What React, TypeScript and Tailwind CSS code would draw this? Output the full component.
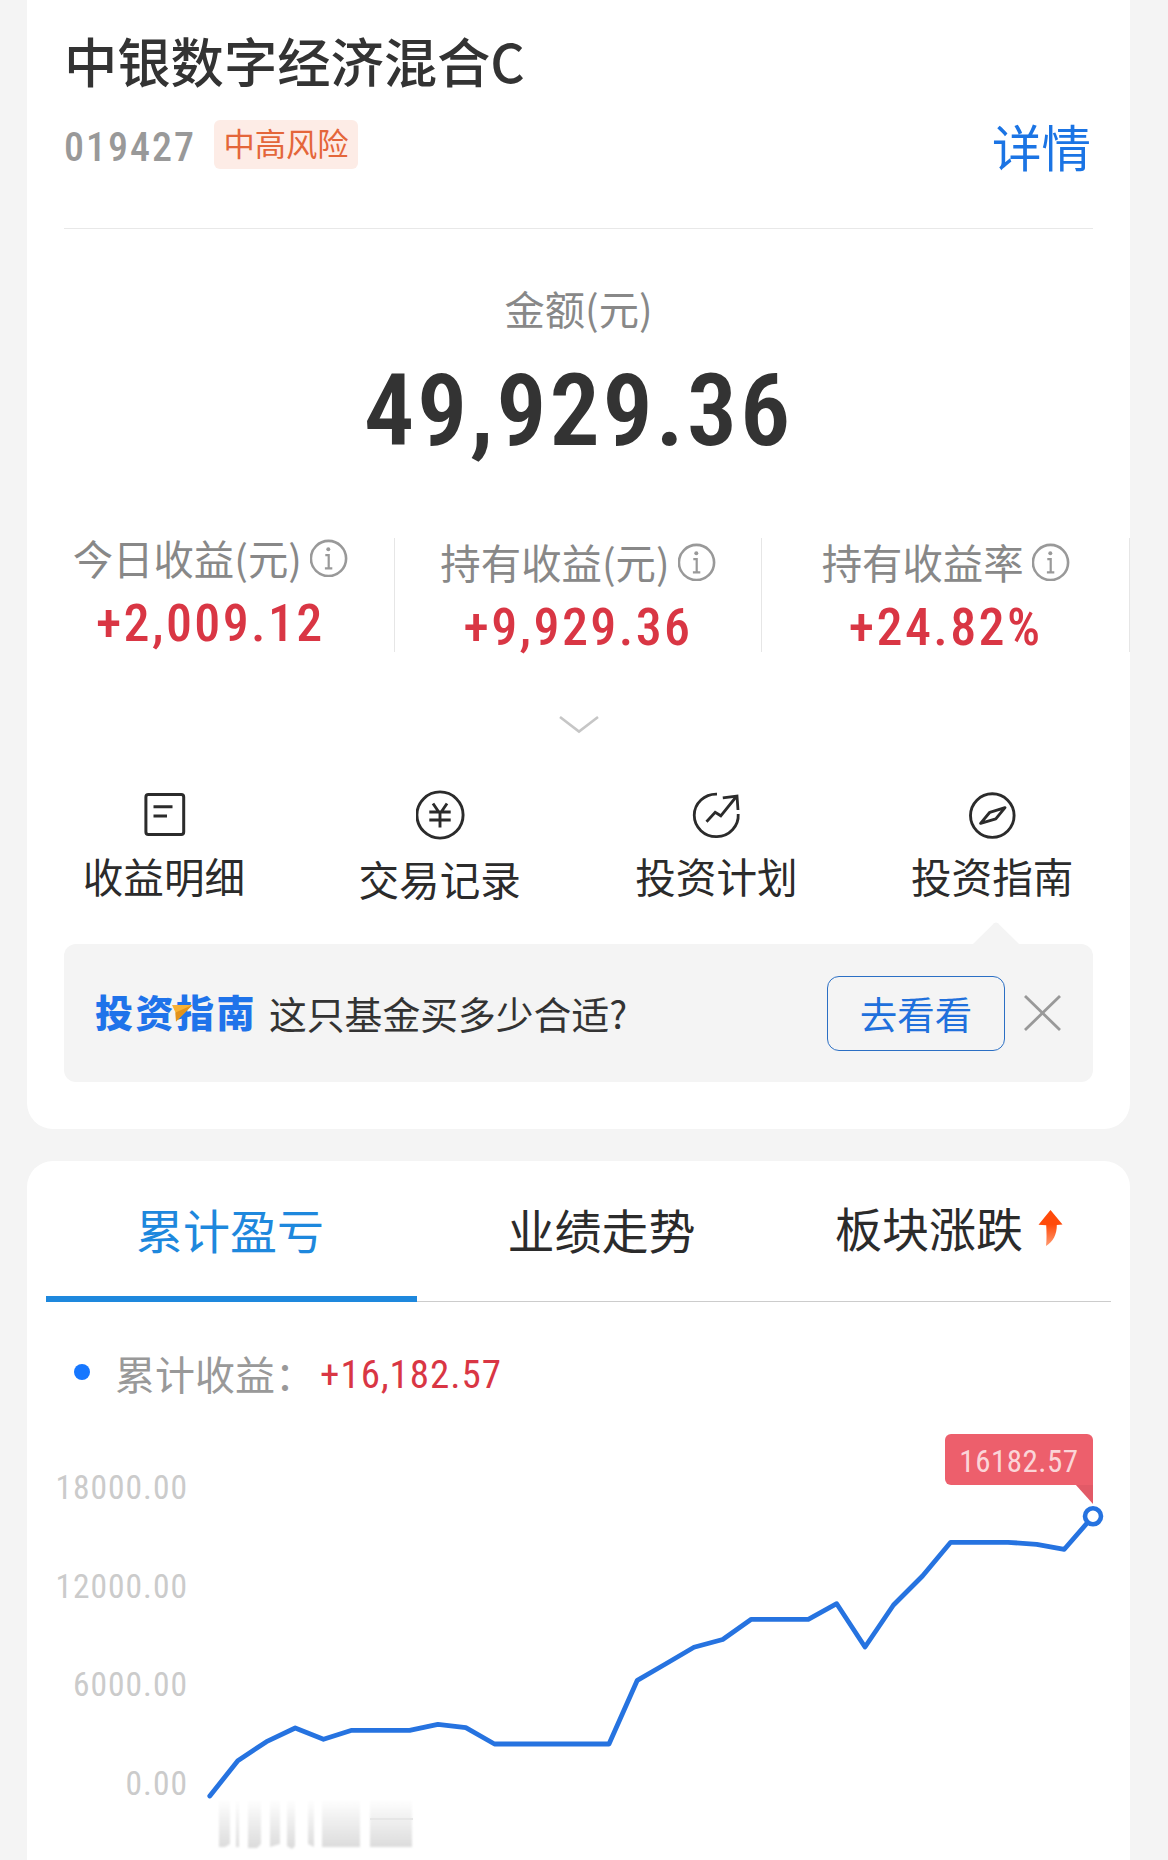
import React from 'react'

const cjk = "font-['Noto_Sans_CJK_SC',sans-serif]"
const din = "font-['Roboto','Noto_Sans_CJK_SC',sans-serif] [font-stretch:75%]"

const stats = [
  { label: '今日收益(元)', value: '+2,009.12', className: "-top-[5px]" },
  { label: '持有收益(元)', value: '+9,929.36', className: "-top-px" },
  { label: '持有收益率', value: '+24.82%', className: "-top-px" },
]

const yLabels = ['18000.00', '12000.00', '6000.00', '0.00']

// chart space: starts at the top of the plot, one unit per pixel
const linePoints = [
  [182.8, 376], [210.8, 340.7], [239.5, 321.7], [268.2, 308], [296.5, 319.3],
  [324.8, 310.3], [382.6, 310.3], [410.9, 304.3], [438.8, 307.7], [467.5, 324],
  [582, 324], [610.3, 260.3], [638.5, 244], [667, 227.3], [695.7, 219.5],
  [724.3, 199.3], [781.3, 199.3], [809.7, 183.7], [838, 227], [866.5, 185],
  [895.5, 156], [923.7, 122.3], [981, 122.3], [1009.7, 124.3], [1037.3, 129.3],
  [1066, 96.3],
]

const InfoIcon = () => (
  <svg width="38" height="38" viewBox="0 0 38 38" fill="none" stroke="#999" strokeWidth="2.6">
    <circle cx="18.5" cy="19.5" r="17.6" />
    <path d="M15.3 16.1h3.4v13M14.9 29.3h7.4" strokeWidth="2.2" />
    <circle cx="18.3" cy="10.3" r="2" fill="#999" stroke="none" />
  </svg>
)

const DetailIcon = () => (
  <svg width="50" height="50" viewBox="0 0 50 50" fill="none" stroke="#2b2b2b" strokeWidth="3">
    <rect x="5.9" y="4.4" width="37.8" height="40.2" rx="2.5" />
    <path d="M13.5 16.7h19M13.5 26H27" />
  </svg>
)

const YenIcon = () => (
  <svg width="50" height="50" viewBox="0 0 50 50" fill="none" stroke="#2b2b2b" strokeWidth="2.9">
    <circle cx="24" cy="25" r="23.1" />
    <path d="M17 13.5l5.6 8.3M31 13.5l-5.6 8.3M13.3 22h21.4M13.3 30h21.4M24 22v15.6" />
  </svg>
)

const PlanIcon = () => (
  <svg width="50" height="50" viewBox="0 0 50 50" fill="none" stroke="#2b2b2b" strokeWidth="2.8">
    <path d="M26 4.1A22 21.3 0 1 0 47.2 24" />
    <path d="M15.5 31.8l8.7-9.4 5.6 3.4L45.8 6" />
    <path d="M31.8 7.8L46 6l1 14" />
  </svg>
)

const GuideIcon = () => (
  <svg width="50" height="50" viewBox="0 0 50 50" fill="none" stroke="#2b2b2b" strokeWidth="2.9">
    <circle cx="25.3" cy="25.6" r="21.8" />
    <path d="M38 17.6L22.8 22.3 13.6 33.4l15.2-4.6z" strokeLinejoin="round" />
  </svg>
)

const actions = [
  { label: '收益明细', icon: <DetailIcon />, className: "-ml-0.5" },
  { label: '交易记录', icon: <YenIcon />, className: "-ml-0.5 pt-[3px]" },
  { label: '投资计划', icon: <PlanIcon />, className: "" },
  { label: '投资指南', icon: <GuideIcon />, className: "" },
]

const FundCard = () => {
  return (
    <div className="h-[1129px] bg-white rounded-b-[26px] flex flex-col">
      <div className="h-[229px] mx-[37px] border-b border-[#e8e8e8] flex flex-col">
        <h1 className="mt-7 h-16 leading-[64px] text-[53.3px] font-medium text-[#333]">中银数字经济混合C</h1>
        <div className="mt-[27px] h-[50px] flex flex-row items-center">
          <span className={`${din} text-[40px] font-medium tracking-[2px] text-[#999] pt-[7px] w-[130px]`}>019427</span>
          <span className="ml-5 w-[144px] h-[49px] rounded-md bg-[#fdece6] text-[#e4663a] text-[31.3px] leading-[46px] text-center">中高风险</span>
          <a className="ml-auto mr-0.5 text-[49.5px] leading-[50px] text-[#1b74e4] pt-1">详情</a>
        </div>
      </div>

      <div className="flex flex-col items-center">
        <span className="mt-[54px] h-[50px] leading-[50px] text-[40.3px] text-[#888]">金额(元)</span>
        <span className={`${din} mt-[22px] h-[112px] leading-[112px] text-[100px] font-semibold tracking-[2.8px] text-[#333]`}>49,929.36</span>
      </div>

      <div className="mt-[71px] h-[114px] grid grid-cols-3 grid-rows-[114px]">
        {stats.map((stat) => (
          <div key={stat.label} className="border-r border-[#e6e6e6]">
            <div className={`relative flex flex-col items-center ${stat.className}`}>
              <div className="h-[50px] flex flex-row items-center gap-2">
                <span className="text-[40.4px] leading-[50px] text-[#888]">{stat.label}</span>
                <InfoIcon />
              </div>
              <span className={`${din} mt-[9px] h-[64px] leading-[64px] text-[52px] font-medium tracking-[2.4px] text-[#d93644]`}>{stat.value}</span>
            </div>
          </div>
        ))}
      </div>

      <svg className="mt-[63px] mx-auto" width="42" height="20" viewBox="0 0 42 20" fill="none" stroke="#c6c6c6" strokeWidth="2.6">
        <path d="M2 2l19 14.5L40 2" />
      </svg>

      <div className="mt-[55px] h-[154px] grid grid-cols-4">
        {actions.map((action) => (
          <div key={action.label} className="flex flex-col items-center">
            {action.icon}
            <span className={`mt-[11px] leading-[50px] text-[40.6px] text-[#2b2b2b] ${action.className}`}>{action.label}</span>
          </div>
        ))}
      </div>

      <div className="relative mx-[37px] h-[138px] rounded-xl bg-[#f4f4f4] flex flex-row items-center">
        <svg className="absolute left-[908px] -top-[22px]" width="48" height="23" viewBox="0 0 48 23" fill="#f4f4f4">
          <path d="M0 23L22 1.2q2-1.6 4 0L48 23z" />
        </svg>
        <div className="relative -top-0.5 ml-[31px] text-[38px] tracking-[2.5px] font-black text-[#1f73ea] leading-[50px] whitespace-nowrap">
          投资指南
          <svg className="absolute left-[77px] top-[19px]" width="21" height="17" viewBox="0 0 21 17">
            <path d="M0 0h20.5L4 16.5l-.5-9z" fill="#f9b233" />
            <path d="M20.5 0L4 16.5l-.5-9z" fill="#e2931c" />
          </svg>
        </div>
        <span className="ml-3 text-[37.8px] leading-[50px] text-[#333]">这只基金买多少合适?</span>
        <button className="ml-auto w-[178px] h-[75px] rounded-xl border border-[#2b6fc4] text-[37.5px] text-[#2070dc]">去看看</button>
        <svg className="ml-[18px] mr-[31px]" width="39" height="36" viewBox="0 0 39 36" fill="none" stroke="#999" strokeWidth="2.8">
          <path d="M2 1l35 34M37 1L2 35" />
        </svg>
      </div>
    </div>
  )
}

const ProfitChart = () => {
  const end = linePoints[linePoints.length - 1]

  return (
    <div className="relative h-[440px]">
      <div className="absolute left-0 top-[19px] w-[161px] flex flex-col">
        {yLabels.map((label) => (
          <span key={label} className={`${din} h-[98.7px] leading-[98.7px] text-right text-[33.5px] tracking-[1px] text-[#cbcbcb]`}>{label}</span>
        ))}
      </div>

      <svg className="absolute left-0 top-0" width="1103" height="440" viewBox="0 0 1103 440" fill="none">
        <defs>
          <linearGradient id="fade" x1="0" y1="379" x2="0" y2="427" gradientUnits="userSpaceOnUse">
            <stop offset="0" stopColor="#fff" />
            <stop offset="1" stopColor="#dcdcdc" />
          </linearGradient>
          <filter id="soft"><feGaussianBlur stdDeviation="0.8" /></filter>
        </defs>
        <g fill="url(#fade)" filter="url(#soft)">
          <path d="M192 380h11v44l-5 3h-6z" />
          <rect x="209" y="380" width="3" height="47" />
          <path d="M221 380h13v44l-4 4h-9z" />
          <path d="M243 380h10v44l-10 3z" />
          <path d="M260 380h8v46l-3 3-5-3z" />
          <path d="M281 380h6v47l-6-3z" />
          <rect x="295" y="380" width="38" height="47" />
          <rect x="343" y="380" width="42" height="47" />
        </g>
        <path d="M343 399h43" stroke="#e6e6e6" strokeWidth="2" />
        <polyline points={linePoints.map((p) => p.join(',')).join(' ')} stroke="#2673e0" strokeWidth="4.8" strokeLinejoin="round" strokeLinecap="round" />
        <circle cx={end[0]} cy={end[1]} r="8" fill="#fff" stroke="#2673e0" strokeWidth="4.6" />
        <path d="M1048 64h18v20z" fill="#e25a67" />
      </svg>

      <div className={`${din} absolute left-[918px] top-[14px] w-[148px] h-[51px] rounded-md rounded-br-none bg-[#ed5f6c] text-[#fbd5d8] text-[31px] leading-[55px] text-center tracking-[0.5px]`}>16182.57</div>
    </div>
  )
}

const TrendCard = () => {
  return (
    <div className="mt-8 h-[699px] bg-white rounded-t-[26px] flex flex-col">
      <div className="mx-[19px] h-[141px] grid grid-cols-[371px_370px_1fr] border-b border-[#ccc] text-[47px] text-[#2b2b2b] leading-[60px]">
        <div className="h-[141px] border-b-6 border-[#1e88dd] text-[#1e88dd] text-center pt-[38px] pr-[3px]">累计盈亏</div>
        <div className="text-center pt-[38px] pr-px">业绩走势</div>
        <div className="flex flex-row justify-center pt-9 gap-[15px]">
          板块涨跌
          <svg className="mt-[13px]" width="25" height="36" viewBox="0 0 25 36">
            <defs>
              <linearGradient id="up" x1="0" y1="0" x2="0" y2="1">
                <stop offset="0.4" stopColor="#ff4a0a" />
                <stop offset="1" stopColor="#ff9a70" />
              </linearGradient>
            </defs>
            <path d="M12.5 0L24.5 14.5 18.8 15C19 24 15 32 8 36 8.8 30 8.6 22 8.2 15.2L.5 14.8z" fill="url(#up)" />
          </svg>
        </div>
      </div>

      <div className="mt-[46px] ml-[47px] h-[50px] flex flex-row items-center">
        <span className="w-4 h-4 rounded-full bg-[#1677ff] -mt-0.5" />
        <span className="ml-[25px] w-[205px] text-[40px] leading-[50px] text-[#999] whitespace-nowrap">累计收益：</span>
        <span className={`${din} pt-1 text-[39px] tracking-[1px] text-[#d93644]`}>+16,182.57</span>
      </div>

      <div className="mt-[22px]">
        <ProfitChart />
      </div>
    </div>
  )
}

const App = () => {
  return (
    <div className={`${cjk} w-[1168px] h-[1860px] overflow-hidden bg-[#f4f4f4] pl-[27px] pr-[38px]`}>
      <FundCard />
      <TrendCard />
    </div>
  )
}

export default App
